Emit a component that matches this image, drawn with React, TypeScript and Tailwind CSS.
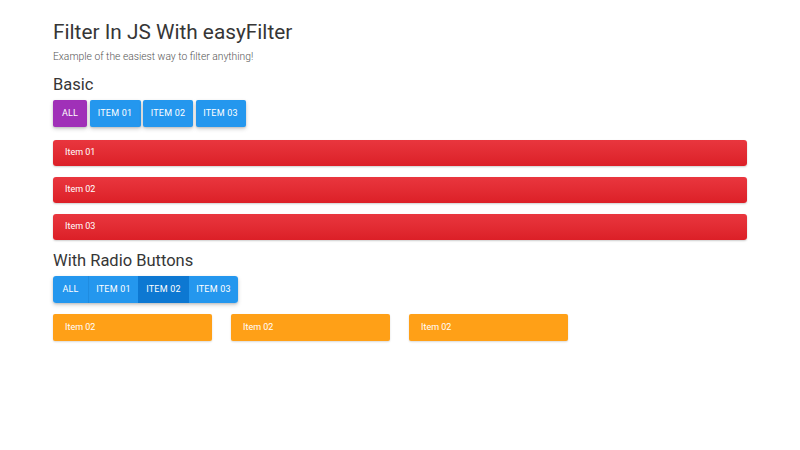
import React from "react";

const btnBase =
  "h-[27px] flex items-center justify-center text-[9px] font-normal text-white uppercase tracking-[0.2px] rounded-[2px] shadow-[0_2px_4px_rgba(0,0,0,0.18),0_1px_2px_rgba(0,0,0,0.12)]";

const grpBtn = "h-[27px] flex items-center justify-center text-[9px] font-normal text-white uppercase tracking-[0.2px]";

export default function App() {
  return (
    <div className="w-[800px] h-[450px] bg-white" style={{ fontFamily: "Roboto, 'Liberation Sans', sans-serif" }}>
      <div className="mx-auto w-[694px] pt-[18px]">
        <h1 className="text-[20.8px] leading-[28px] font-normal text-[#363636]">Filter In JS With easyFilter</h1>
        <p className="mt-[4px] text-[10.3px] leading-[14px] font-light text-[#555]">Example of the easiest way to filter anything!</p>
        <h2 className="mt-[10px] text-[16.5px] leading-[22px] font-normal text-[#363636]">Basic</h2>
        <div className="mt-[4px] flex gap-[2.5px]">
          <div className={`${btnBase} w-[34px] bg-[#a030b8]`}>All</div>
          <div className={`${btnBase} w-[51px] bg-[#2497ee]`}>Item 01</div>
          <div className={`${btnBase} w-[50px] bg-[#2497ee]`}>Item 02</div>
          <div className={`${btnBase} w-[50px] bg-[#2497ee]`}>Item 03</div>
        </div>
        <div className="mt-[13px] flex flex-col gap-[11px]">
          {["Item 01", "Item 02", "Item 03"].map((t) => (
            <div
              key={t}
              className="h-[26px] flex items-center pl-[12px] text-[9px] text-white rounded-[3px] bg-gradient-to-b from-[#e9363e] to-[#dc1f27] shadow-[0_1px_2px_rgba(0,0,0,0.2)]"
            >
              {t}
            </div>
          ))}
        </div>
        <h2 className="mt-[10px] text-[16.5px] leading-[22px] font-normal text-[#363636]">With Radio Buttons</h2>
        <div className="mt-[4px] flex w-fit rounded-[3px] overflow-hidden shadow-[0_2px_4px_rgba(0,0,0,0.18),0_1px_2px_rgba(0,0,0,0.12)]">
          <div className={`${grpBtn} w-[35px] bg-[#2497ee]`}>All</div>
          <div className={`${grpBtn} w-[50px] bg-[#2497ee] border-l border-[#1f8ce0]`}>Item 01</div>
          <div className={`${grpBtn} w-[51px] bg-[#0d78d2]`}>Item 02</div>
          <div className={`${grpBtn} w-[49px] bg-[#2497ee]`}>Item 03</div>
        </div>
        <div className="mt-[11px] flex gap-[19px]">
          {[0, 1, 2].map((i) => (
            <div
              key={i}
              className="w-[159px] h-[27px] flex items-center pl-[12px] text-[9px] text-white rounded-[2px] bg-[#ffa017] shadow-[0_1px_2px_rgba(0,0,0,0.15)]"
            >
              Item 02
            </div>
          ))}
        </div>
      </div>
    </div>
  );
}
